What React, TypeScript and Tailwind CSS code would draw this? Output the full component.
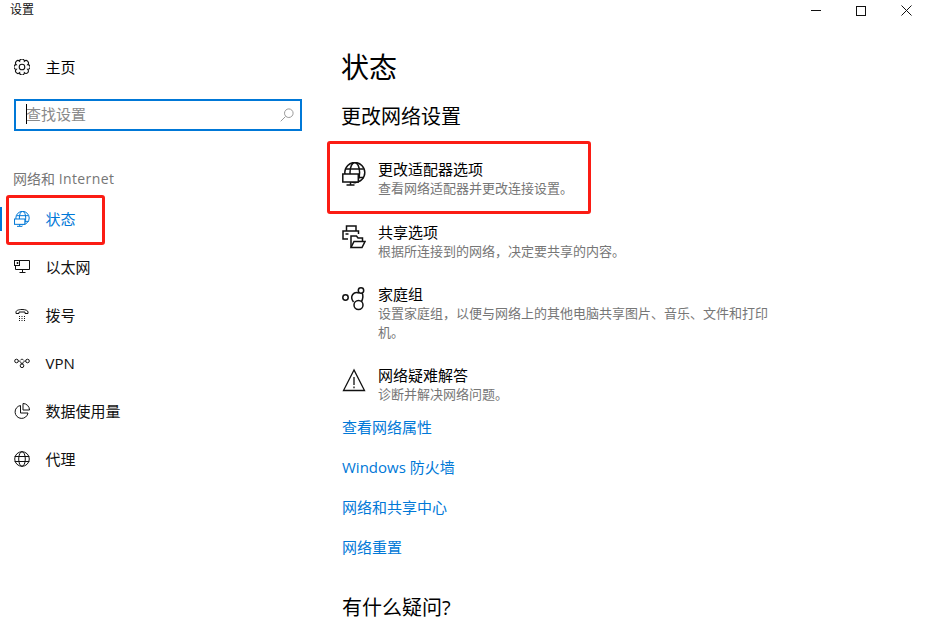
const FONT = "font-['Segoe_UI','Open_Sans','Noto_Sans_CJK_SC',sans-serif]";

// scalloped outline, 8 bumps
const gearPath = Array.from({ length: 8 }, (_, i) => {
  const a = ((i + 1) * Math.PI) / 4 - Math.PI / 8;
  const x = (8 + 6.2 * Math.cos(a)).toFixed(2);
  const y = (8 + 6.2 * Math.sin(a)).toFixed(2);
  return `A2 2 0 0 1 ${x} ${y}`;
}).join(" ");
const gearStart = `M${(8 + 6.2 * Math.cos(-Math.PI / 8)).toFixed(2)} ${(8 + 6.2 * Math.sin(-Math.PI / 8)).toFixed(2)}`;

function GearIcon() {
  return (
    <svg width="16" height="16" viewBox="0 0 16 16" fill="none" stroke="#111" strokeWidth="1.100">
      <circle cx="8" cy="8" r="2.800" />
      <path d={`${gearStart} ${gearPath}z`} />
    </svg>
  );
}

function StatusIcon({ color = "#111", size = 16 }: { color?: string; size?: number }) {
  return (
    <svg width={size} height={size} viewBox="0 0 24 24" fill="none" stroke={color} strokeWidth="1.500">
      <circle cx="12.800" cy="10.500" r="10" />
      <ellipse cx="12.800" cy="10.500" rx="4.800" ry="10" />
      <path d="M3.800 7h18M16 15.500h6" />
      <rect x=".8" y="12" width="15.500" height="8" fill="#fff" />
      <path d="M8.500 20v2.500M4.500 23h8" />
    </svg>
  );
}

function EthernetIcon() {
  return (
    <svg width="16" height="16" viewBox="0 0 16 16" fill="none" stroke="#111" strokeWidth="1">
      <path d="M5 1.500h10.500v9H1.500V7" />
      <rect x=".5" y="1.500" width="5" height="5" />
      <path d="M3 3.500h1v1H3zM8.500 10.500v3M5.500 13.500h6" />
    </svg>
  );
}

function DialIcon() {
  return (
    <svg width="16" height="16" viewBox="0 0 16 16" fill="none" stroke="#111" strokeWidth="1">
      <path d="M2 6.500V5c0-1.500 2.500-2.500 6-2.500s6 1 6 2.500v1.500h-3V5H5v1.500z" />
      <path d="M5 9.500h1M7.500 9.500h1M10 9.500h1M5 11.500h1M7.500 11.500h1M10 11.500h1M5 13.500h1M7.500 13.500h1M10 13.500h1" />
    </svg>
  );
}

function VpnIcon() {
  return (
    <svg width="16" height="16" viewBox="0 0 16 16" fill="none" stroke="#111" strokeWidth="1">
      <circle cx="2.500" cy="6" r="1.800" />
      <circle cx="13.500" cy="6" r="1.800" />
      <circle cx="8" cy="10.800" r="1.800" />
      <path d="M4.300 6c2 0 2.500 1 3.200 3M11.700 6c-2 0-2.500 1-3.200 3M6.500 5c1-1 2-1 3 0" />
    </svg>
  );
}

function DataIcon() {
  return (
    <svg width="16" height="16" viewBox="0 0 16 16" fill="none" stroke="#111" strokeWidth="1">
      <path d="M6.500 2.500a6.500 6.500 0 1 0 7.500 7.500H6.500z" />
      <path d="M9 .5a6.500 6.500 0 0 1 6.500 6.500H9z" />
    </svg>
  );
}

function GlobeIcon() {
  return (
    <svg width="16" height="16" viewBox="0 0 16 16" fill="none" stroke="#111" strokeWidth="1">
      <circle cx="8" cy="8" r="7.300" />
      <ellipse cx="8" cy="8" rx="3.300" ry="7.300" />
      <path d="M.7 5.500h14.600M.7 10.500h14.600" />
    </svg>
  );
}

function ShareIcon() {
  return (
    <svg width="24" height="24" viewBox="0 0 24 24" fill="none" stroke="#111" strokeWidth="1.500">
      <path d="M4.500 6V1h9.500v5" />
      <path d="M6 14H1V6h15.500v3" />
      <path d="M3.500 9h3" />
      <path d="M9 22.500V11h5.500l1.500 2h4.500v3" />
      <path d="M9 22.500l3-6h11l-3 6z" fill="#fff" />
    </svg>
  );
}

function HomegroupIcon() {
  return (
    <svg width="24" height="24" viewBox="0 0 24 24" fill="none" stroke="#111" strokeWidth="1.500">
      <circle cx="3.500" cy="10.500" r="2.700" />
      <circle cx="19" cy="3.500" r="2.700" />
      <circle cx="16.500" cy="18" r="4.500" />
      <path d="M17 6c-5-2-10 3-5.500 9" />
      <path d="M20 6c1.500 2 1 6-.5 8.500" />
    </svg>
  );
}

function WarningIcon() {
  return (
    <svg width="24" height="24" viewBox="0 0 24 24" fill="none" stroke="#111" strokeWidth="1.300">
      <path d="M12 2 1.500 22.500h21z" />
      <path d="M12 9v8M12 18.500v1.800" />
    </svg>
  );
}

const navItems = [
  { label: "以太网", icon: <EthernetIcon /> },
  { label: "拨号", icon: <DialIcon /> },
  { label: "VPN", icon: <VpnIcon /> },
  { label: "数据使用量", icon: <DataIcon /> },
  { label: "代理", icon: <GlobeIcon /> },
];

function SettingRow({
  icon,
  title,
  desc,
  className,
}: {
  icon: React.ReactNode;
  title: string;
  desc: string;
  className: string;
}) {
  return (
    <div className={`flex ${className}`}>
      <div className="w-[37px] pl-px pt-[3px] shrink-0">{icon}</div>
      <div>
        <div className="text-[15px] leading-[20px] text-black">{title}</div>
        <div className="text-[13px] leading-[19px] text-[#767676] w-[400px]">{desc}</div>
      </div>
    </div>
  );
}

export default function App() {
  return (
    <div className={`${FONT} relative w-[925px] h-[620px] overflow-hidden bg-white text-black`}>
      {/* Title bar */}
      <div className="flex items-start justify-between h-[30px]">
        <div className="pl-[10px] pt-[1px] text-[12px] leading-[18px] text-[#111]">设置</div>
        <div className="flex gap-[7px]">
          <div className="w-[38px] h-[21px] flex items-center justify-center">
            <div className="w-[10px] h-px bg-[#111]" />
          </div>
          <div className="w-[38px] h-[21px] flex items-center justify-center">
            <div className="w-[10px] h-[10px] border border-[#111]" />
          </div>
          <div className="w-[38px] h-[21px] flex items-center justify-center">
            <svg width="11" height="11" viewBox="0 0 11 11" stroke="#111" strokeWidth="1">
              <path d="M.5.500l10 10M10.500.500l-10 10" />
            </svg>
          </div>
        </div>
      </div>

      <div className="flex">
        {/* Sidebar */}
        <aside className="w-[341px] shrink-0">
          <div className="flex items-center h-[48px] mt-[13px] pl-[14px]">
            <div className="w-[31.5px]">
              <GearIcon />
            </div>
            <span className="text-[15px]">主页</span>
          </div>
          <div className="ml-[14px] mt-[8px] w-[288px] h-[32px] border-2 border-[#0078d7] flex items-center justify-between pl-[10px] pr-[6px]">
            <span className="relative text-[15px] leading-[20px] -top-px text-[#8a8a8a]">
              <span className="absolute left-0 top-0 w-px h-[20px] bg-black" />
              查找设置
            </span>
            <svg width="14" height="14" viewBox="0 0 14 14" fill="none" stroke="#999" strokeWidth="1">
              <circle cx="8.800" cy="5.200" r="4.300" />
              <path d="M5.500 8.500.7 13.300" />
            </svg>
          </div>
          <div className="pl-[13px] mt-[38px] text-[14px] leading-[20px] text-[#767676]">
            网络和 <span className="tracking-[0.4px]">Internet</span>
          </div>
          <div className="relative flex items-center h-[48px] mt-[6px] pl-[14px] text-[#0078d7]">
            <div className="absolute left-0 top-[12px] w-[2px] h-[24px] bg-[#0078d7]" />
            <div className="w-[31.5px]">
              <StatusIcon color="#0078d7" />
            </div>
            <span className="text-[15px]">状态</span>
            <div className="absolute left-[6px] top-0 w-[99px] h-[50px] border-[3px] border-[#fb1c14] rounded-[3px]" />
          </div>
          {navItems.map((item) => (
            <div key={item.label} className="flex items-center h-[48px] pl-[14px]">
              <div className="w-[31.5px]">{item.icon}</div>
              <span className="text-[15px] text-[#111]">{item.label}</span>
            </div>
          ))}
        </aside>

        {/* Main */}
        <main className="flex-1">
          <h1 className="text-[28px] leading-[40px] mt-[17px] font-normal">状态</h1>
          <h2 className="text-[20px] leading-[28px] mt-[16px] font-normal">更改网络设置</h2>
          <div className="relative mt-[28px]">
            <div className="absolute left-[-14px] top-[-18px] w-[264px] h-[73px] border-[3px] border-[#fb1c14] rounded-[3px]" />
            <SettingRow icon={<StatusIcon size={24} />} title="更改适配器选项" desc="查看网络适配器并更改连接设置。" className="h-[63px]" />
            <SettingRow icon={<ShareIcon />} title="共享选项" desc={"根据所连接到的网络\uFF0C决定要共享的内容。"} className="h-[62px]" />
            <SettingRow
              icon={<HomegroupIcon />}
              title="家庭组"
              desc={"设置家庭组\uFF0C以便与网络上的其他电脑共享图片、音乐、文件和打印机。"}
              className="h-[81px]"
            />
            <SettingRow icon={<WarningIcon />} title="网络疑难解答" desc="诊断并解决网络问题。" className="h-[43px]" />
          </div>
          <div className="mt-[9px] ml-px flex flex-col gap-[20px] text-[15px] leading-[20px] text-[#0078d7]">
            <div>查看网络属性</div>
            <div>Windows 防火墙</div>
            <div>网络和共享中心</div>
            <div>网络重置</div>
          </div>
          <h2 className="text-[20px] leading-[24px] mt-[39px] ml-px font-normal">有什么疑问?</h2>
        </main>
      </div>
    </div>
  );
}
